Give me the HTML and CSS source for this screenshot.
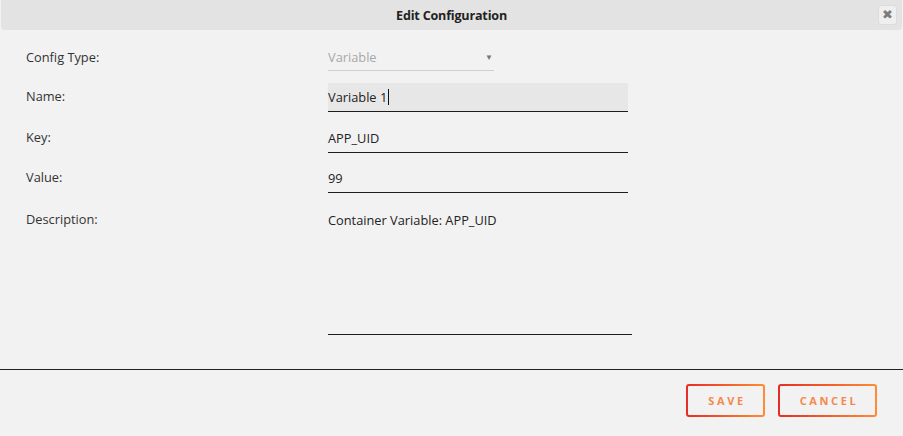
FILE: index.html
```html
<!DOCTYPE html>
<html>
<head>
<meta charset="utf-8">
<link rel="stylesheet" href="styles.css">
</head>
<body>
<div class="dialog">
  <div class="header">
    <span class="title">Edit Configuration</span>
    <button class="close" type="button">&#x2716;</button>
  </div>
  <div class="form">
    <div class="row row-select">
      <div class="label">Config Type:</div>
      <div class="select">
        <span>Variable</span>
        <span class="arrow">&#9660;</span>
      </div>
    </div>
    <div class="row">
      <div class="label">Name:</div>
      <div class="input focused">Variable 1<span class="caret"></span></div>
    </div>
    <div class="row">
      <div class="label">Key:</div>
      <div class="input">APP_UID</div>
    </div>
    <div class="row">
      <div class="label">Value:</div>
      <div class="input">99</div>
    </div>
    <div class="row row-desc">
      <div class="label">Description:</div>
      <div class="textarea">Container Variable: APP_UID</div>
    </div>
  </div>
  <div class="footer">
    <button class="btn" type="button">SAVE</button>
    <button class="btn btn-wide" type="button">CANCEL</button>
  </div>
</div>
</body>
</html>
```

FILE: styles.css
```css
html, body {
  margin: 0;
  padding: 0;
  background: #f2f2f2;
}
body {
  font-family: "Open Sans", "Noto Sans", sans-serif;
  font-size: 12.8px;
  color: #333;
  width: 903px;
  height: 436px;
  overflow: hidden;
}
.dialog {
  display: flex;
  flex-direction: column;
}
.header {
  height: 30px;
  margin: 0 1px;
  background: #e3e3e3;
  border-radius: 0 0 4px 4px;
  display: flex;
  align-items: center;
  justify-content: center;
  position: relative;
}
.title {
  font-weight: 700;
  font-size: 12.6px;
  color: #222;
  letter-spacing: -0.2px;
}
.close {
  position: absolute;
  right: 5px;
  top: 5px;
  width: 19px;
  height: 20px;
  padding: 0;
  border: 1px solid #dcdcdc;
  border-radius: 3px;
  background: #efefef;
  color: #7c7c7c;
  font-size: 13px;
  line-height: 18px;
  font-family: "DejaVu Sans", sans-serif;
}
.form {
  padding: 16px 0 0 26px;
  display: flex;
  flex-direction: column;
}
.row {
  display: flex;
  margin-bottom: 12px;
}
.row:nth-child(3) {
  margin-bottom: 11px;
}
.label {
  width: 302px;
  flex: none;
  line-height: 18px;
  padding-top: 4px;
  color: #333;
}
.row-select .label {
  padding-top: 2px;
}
.row-desc .label {
  padding-top: 5px;
}
.select {
  width: 166px;
  height: 25px;
  box-sizing: border-box;
  border-bottom: 1px solid #cfcfcf;
  display: flex;
  justify-content: space-between;
  line-height: 18px;
  padding-top: 2px;
  color: #a8a8a8;
}
.arrow {
  font-size: 8px;
  color: #777;
  padding-right: 1px;
  line-height: 18px;
}
.input {
  width: 300px;
  height: 29px;
  box-sizing: border-box;
  border-bottom: 1px solid #1e1e1e;
  line-height: 18px;
  padding-top: 5px;
  color: #222;
}
.input.focused {
  background: #e7e7e7;
  border-bottom-width: 1.5px;
}
.caret {
  display: inline-block;
  width: 1px;
  height: 16px;
  background: #111;
  vertical-align: -3px;
  margin-left: 1px;
}
.textarea {
  width: 304px;
  height: 130px;
  box-sizing: border-box;
  border-bottom: 1px solid #1e1e1e;
  line-height: 18px;
  padding-top: 6px;
  color: #222;
}
.footer {
  margin-top: 22px;
  border-top: 1px solid #222;
  display: flex;
  justify-content: flex-end;
  gap: 13px;
  padding: 14px 26px 0 0;
}
.btn {
  width: 79px;
  height: 33px;
  box-sizing: border-box;
  border: 2px solid transparent;
  border-radius: 3px;
  background:
    linear-gradient(#f2f2f2, #f2f2f2) padding-box,
    linear-gradient(90deg, #e52d27, #ff8c33) border-box;
  color: #f6884c;
  font-family: "Open Sans", "Noto Sans", sans-serif;
  font-weight: 700;
  font-size: 11px;
  letter-spacing: 2.6px;
  padding: 0 0 0 3px;
}
.btn-wide {
  width: 99px;
}
```
